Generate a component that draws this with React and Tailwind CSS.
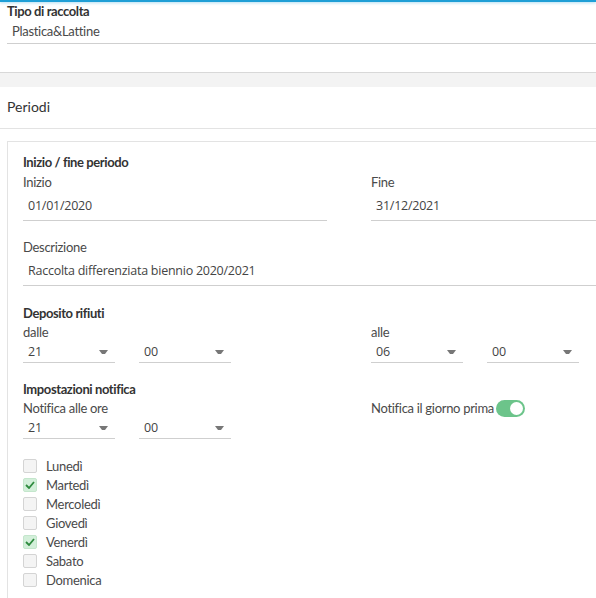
import { useState } from "react";

const label = "font-['Lato',sans-serif] text-[13px] text-[#4a4a4a] leading-4 tracking-[-0.3px]";
const heading = "font-['Lato',sans-serif] text-[13px] font-bold text-[#333] leading-4 tracking-[-0.4px]";
const value = "font-['Open_Sans',sans-serif] text-[12.5px] text-[#444] leading-4 tracking-[-0.25px]";

const Field = ({ title, text, className = "" }) => (
  <div className={className}>
    <div className={label}>{title}</div>
    <div className={`${value} px-[5px] pt-2 pb-[6px] border-b border-[#cfcfcf]`}>{text}</div>
  </div>
);

const Select = ({ text }) => (
  <div className="w-[92px] flex items-center justify-between border-b border-[#cfcfcf] pl-[5px] pr-[7px] h-[21px]">
    <span className={value}>{text}</span>
    <svg width="9" height="5" viewBox="0 0 9 5">
      <path d="M0 0 H9 L6 4 H3 Z" fill="#777" />
    </svg>
  </div>
);

const Check = ({ checked, text }) => (
  <div className="flex items-center h-[19px]">
    <div
      className={`w-[14px] h-[14px] rounded-[2px] border flex items-center justify-center ${
        checked ? "bg-[#d3efda] border-[#c4e6cc]" : "bg-[#f4f4f4] border-[#d4d4d4]"
      }`}
    >
      {checked && (
        <svg width="10" height="8" viewBox="0 0 10 8">
          <path d="M1 4 L4 7 L9 1" fill="none" stroke="#2e8b3e" strokeWidth="1.8" />
        </svg>
      )}
    </div>
    <span className={`${label} ml-[9px]`}>{text}</span>
  </div>
);

export default function App() {
  const [days] = useState([
    ["Lunedì", false],
    ["Martedì", true],
    ["Mercoledì", false],
    ["Giovedì", false],
    ["Venerdì", true],
    ["Sabato", false],
    ["Domenica", false],
  ]);

  return (
    <div className="w-[596px] h-[598px] overflow-hidden bg-white">
      <div className="h-[2px] bg-[#1f9fd6] shadow-[0_1px_3px_rgba(31,159,214,0.4)]" />
      <div className="pl-[7px] pt-[1px]">
        <div className={heading}>Tipo di raccolta</div>
        <div className={`${label} px-[5px] pt-[4px] pb-[4px] border-b border-[#cfcfcf]`}>Plastica&Lattine</div>
      </div>
      <div className="h-[28px]" />
      <div className="h-[15px] bg-[#f3f3f3] border-t border-[#d8d8d8]" />
      <div className="h-[42px] pl-[7px] pt-[12px] border-b border-[#e3e3e3]">
        <div className="font-['Lato',sans-serif] text-[14px] text-[#333] leading-4">Periodi</div>
      </div>
      <div className="ml-[7px] mt-[12px] border-l border-t border-[#e3e3e3] pl-[15px] pt-[12px] pb-[10px]">
        <div className={heading}>Inizio / fine periodo</div>
        <div className="flex mt-1">
          <Field title="Inizio" text="01/01/2020" className="w-[304px]" />
          <Field title="Fine" text="31/12/2021" className="ml-[44px] flex-1" />
        </div>
        <Field title="Descrizione" text="Raccolta differenziata biennio 2020/2021" className="mt-[18px]" />

        <div className={`${heading} mt-[19px]`}>Deposito rifiuti</div>
        <div className="flex mt-[3px]">
          <div className="w-[348px]">
            <div className={label}>dalle</div>
            <div className="flex gap-6 mt-[2px]">
              <Select text="21" />
              <Select text="00" />
            </div>
          </div>
          <div>
            <div className={label}>alle</div>
            <div className="flex gap-6 mt-[2px]">
              <Select text="06" />
              <Select text="00" />
            </div>
          </div>
        </div>

        <div className={`${heading} mt-[18px]`}>Impostazioni notifica</div>
        <div className="flex mt-[3px]">
          <div className="w-[348px]">
            <div className={label}>Notifica alle ore</div>
            <div className="flex gap-6 mt-[2px]">
              <Select text="21" />
              <Select text="00" />
            </div>
          </div>
          <div className="flex items-center h-4">
            <span className={label}>Notifica il giorno prima</span>
            <div className="ml-[2px] w-[29px] h-[17px] rounded-full bg-[#6cc48a] flex items-center justify-end pr-[2px]">
              <div className="w-[13px] h-[13px] rounded-full bg-white" />
            </div>
          </div>
        </div>

        <div className="mt-[17px] flex flex-col">
          {days.map(([d, c]) => (
            <Check key={d} text={d} checked={c} />
          ))}
        </div>
      </div>
    </div>
  );
}
